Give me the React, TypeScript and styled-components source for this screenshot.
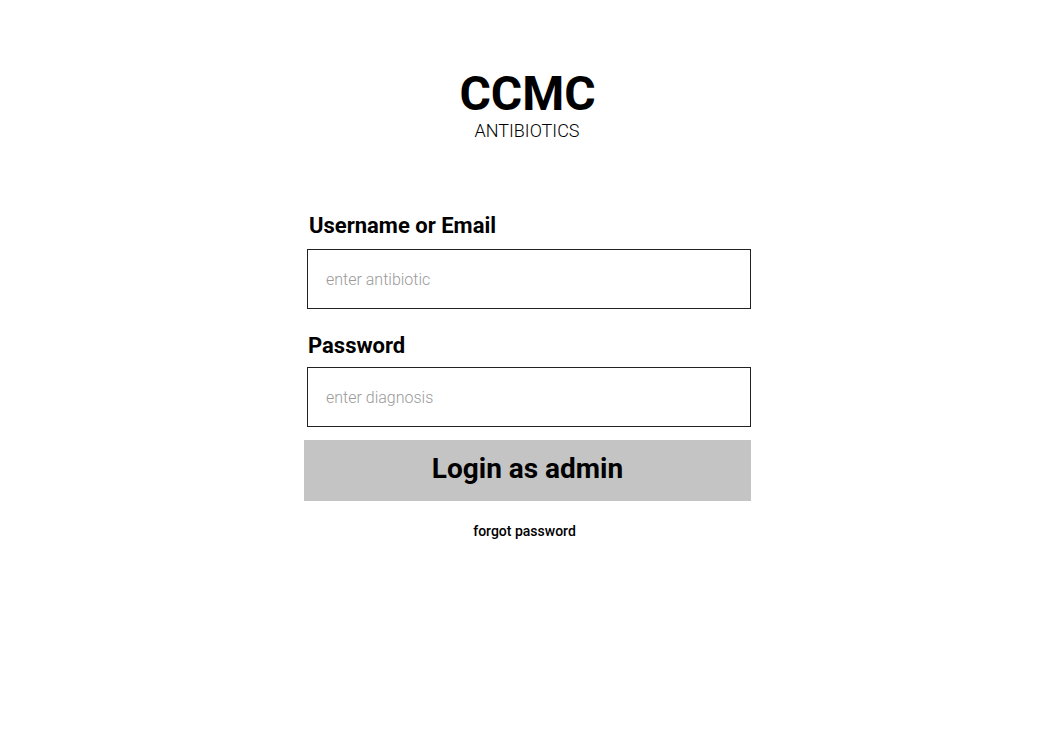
import React from "react";
import styled, { createGlobalStyle } from "styled-components";

const Global = createGlobalStyle`
  html, body { margin: 0; padding: 0; background: #fff; }
  body { font-family: Roboto, "Liberation Sans", sans-serif; color: #000; }
  * { box-sizing: border-box; }
`;

const Page = styled.main`
  width: 1055px;
  min-height: 731px;
  display: flex;
  flex-direction: column;
  align-items: center;
  padding-top: 68px;
`;

const Brand = styled.header`
  display: flex;
  flex-direction: column;
  align-items: center;
`;

const Title = styled.h1`
  margin: 0;
  font-size: 48px;
  font-weight: 700;
  line-height: 52px;
`;

const Subtitle = styled.div`
  font-size: 18px;
  font-weight: 300;
  line-height: 20px;
  margin-top: 1px;
  margin-left: -1px;
`;

const Form = styled.form`
  width: 447px;
  margin-top: 72px;
  display: flex;
  flex-direction: column;
`;

const Label = styled.label<{ $indent: number; $below: number }>`
  font-size: 22px;
  font-weight: 700;
  line-height: 26px;
  padding-left: ${(p) => p.$indent}px;
  margin-bottom: ${(p) => p.$below}px;
`;

const Input = styled.input`
  margin-left: 3px;
  width: 444px;
  height: 60px;
  border: 1px solid #222;
  padding: 0 18px;
  font-family: Roboto, "Liberation Sans", sans-serif;
  font-size: 16px;
  font-weight: 300;
  outline: none;
  &::placeholder { color: #9a9a9a; }
`;

const Field = styled.div<{ $gap: number }>`
  display: flex;
  flex-direction: column;
  margin-bottom: ${(p) => p.$gap}px;
`;

const Button = styled.button`
  width: 447px;
  height: 61px;
  background: #c4c4c4;
  border: none;
  font-family: Roboto, "Liberation Sans", sans-serif;
  font-size: 28px;
  font-weight: 700;
  color: #000;
  padding-bottom: 6px;
  cursor: pointer;
`;

const Forgot = styled.a`
  align-self: center;
  margin-top: 22px;
  margin-left: -6px;
  font-size: 14px;
  font-weight: 500;
  color: #000;
  text-decoration: none;
`;

export default function App() {
  return (
    <>
      <Global />
      <Page>
        <Brand>
          <Title>CCMC</Title>
          <Subtitle>ANTIBIOTICS</Subtitle>
        </Brand>
        <Form onSubmit={(e) => e.preventDefault()}>
          <Field $gap={24}>
            <Label $indent={5} $below={10}>Username or Email</Label>
            <Input placeholder="enter antibiotic" />
          </Field>
          <Field $gap={13}>
            <Label $indent={4} $below={8}>Password</Label>
            <Input type="password" placeholder="enter diagnosis" />
          </Field>
          <Button type="submit">Login as admin</Button>
          <Forgot href="#">forgot password</Forgot>
        </Form>
      </Page>
    </>
  );
}
